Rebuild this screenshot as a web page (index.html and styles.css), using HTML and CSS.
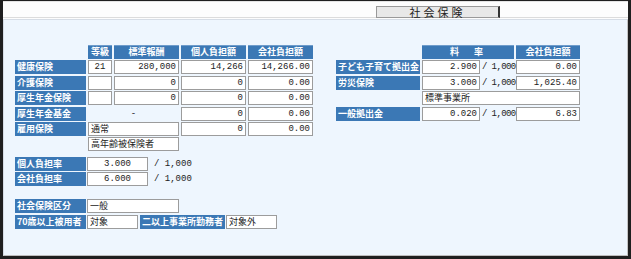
FILE: index.html
```html
<!DOCTYPE html>
<html lang="ja">
<head>
  <meta charset="UTF-8" />
  <title>社会保険</title>
  <link rel="stylesheet" href="styles.css">
</head>
<body>
  <div class="window">
    <div class="titlebar">
      <div class="title">社会保険</div>
    </div>

    <div class="content">
      <div class="left">
        <div class="main-grid">
          <div></div>
          <div class="hd">等級</div>
          <div class="hd">標準報酬</div>
          <div class="hd">個人負担額</div>
          <div class="hd">会社負担額</div>

          <div class="lb">健康保険</div>
          <div class="box center">21</div>
          <div class="box num">280,000</div>
          <div class="box num">14,266</div>
          <div class="box num">14,266.00</div>

          <div class="lb">介護保険</div>
          <div class="box"></div>
          <div class="box num">0</div>
          <div class="box num">0</div>
          <div class="box num">0.00</div>

          <div class="lb">厚生年金保険</div>
          <div class="box"></div>
          <div class="box num">0</div>
          <div class="box num">0</div>
          <div class="box num">0.00</div>

          <div class="lb">厚生年金基金</div>
          <div class="plain span2">-</div>
          <div class="box num">0</div>
          <div class="box num">0.00</div>

          <div class="lb">雇用保険</div>
          <div class="box txt span2">通常</div>
          <div class="box num">0</div>
          <div class="box num">0.00</div>

          <div></div>
          <div class="box txt span2">高年齢被保険者</div>
        </div>

        <div class="rates">
          <div class="row">
            <div class="lb">個人負担率</div>
            <div class="box center rate-box">3.000</div>
            <span class="per">/ 1,000</span>
          </div>
          <div class="row">
            <div class="lb">会社負担率</div>
            <div class="box center rate-box">6.000</div>
            <span class="per">/ 1,000</span>
          </div>
        </div>

        <div class="kubun">
          <div class="row">
            <div class="lb">社会保険区分</div>
            <div class="box txt wide-box">一般</div>
          </div>
          <div class="row">
            <div class="lb">70歳以上被用者</div>
            <div class="box txt short-box">対象</div>
            <div class="lb lb-mid">二以上事業所勤務者</div>
            <div class="box txt short-box">対象外</div>
          </div>
        </div>
      </div>

      <div class="right">
        <div class="side-grid">
          <div></div>
          <div class="hd spaced">料　率</div>
          <div class="hd">会社負担額</div>

          <div class="lb">子ども子育て拠出金</div>
          <div class="rate-cell"><div class="box num">2.900</div><span class="per">/ 1,000</span></div>
          <div class="box num">0.00</div>

          <div class="lb">労災保険</div>
          <div class="rate-cell"><div class="box num">3.000</div><span class="per">/ 1,000</span></div>
          <div class="box num">1,025.40</div>

          <div></div>
          <div class="box txt span2">標準事業所</div>

          <div class="lb">一般拠出金</div>
          <div class="rate-cell"><div class="box num">0.020</div><span class="per">/ 1,000</span></div>
          <div class="box num">6.83</div>
        </div>
      </div>
    </div>
  </div>
</body>
</html>
```

FILE: styles.css
```css
body {
  margin: 0;
  width: 631px;
  height: 259px;
  background: #1f1f1f;
  font-family: "Noto Sans CJK JP", sans-serif;
  font-size: 9px;
  color: #222;
  overflow: hidden;
}

.window {
  margin: 1px 3px 0 3px;
  height: 255px;
  background: #fdfdfd;
  border-top: 1px solid #e4e4e4;
  display: flex;
  flex-direction: column;
  box-sizing: border-box;
}

.titlebar {
  height: 16px;
  border-bottom: 1px solid #dcdcdc;
  padding: 4px 0 0 373px;
  box-sizing: border-box;
}

.title {
  width: 124px;
  height: 12px;
  line-height: 11px;
  box-sizing: border-box;
  background: #e8e8e8;
  border: 1px solid #999;
  border-right: 2px solid #333;
  text-align: center;
  font-size: 11px;
  letter-spacing: 3px;
  color: #222;
}

.content {
  flex: 1;
  margin-top: 1px;
  background: #eef6fe;
  border: 1px solid #d6dde6;
  border-bottom-color: #bdbdbd;
  border-right-color: #c4c4c4;
  display: flex;
  padding: 25px 0 0 11px;
  gap: 23px;
}

.main-grid {
  display: grid;
  grid-template-columns: 71px 24px 65px 65px 65px;
  grid-auto-rows: 14px;
  column-gap: 2px;
  row-gap: 1.4px;
}

.side-grid {
  display: grid;
  grid-template-columns: 84px 92px 64px;
  grid-auto-rows: 14px;
  column-gap: 2px;
  row-gap: 1.4px;
}

.span2 {
  grid-column: span 2;
}

.hd {
  background: #3b78b5;
  color: #fff;
  font-weight: bold;
  text-align: center;
  border-top: 1px solid #6f9ccb;
  box-sizing: border-box;
  line-height: 12px;
}

.spaced {
  letter-spacing: 3px;
}

.lb {
  background: #3b78b5;
  color: #fff;
  font-weight: bold;
  line-height: 14px;
  padding-left: 2px;
  white-space: nowrap;
  box-sizing: border-box;
}

.box {
  background: #fff;
  border: 1px solid #9c9c9c;
  box-sizing: border-box;
  line-height: 12px;
  white-space: nowrap;
  overflow: hidden;
}

.num {
  font-family: "Liberation Mono", monospace;
  text-align: right;
  padding-right: 2px;
}

.center {
  font-family: "Liberation Mono", monospace;
  text-align: center;
}

.txt {
  padding-left: 2px;
}

.plain {
  text-align: center;
  line-height: 14px;
  font-family: "Liberation Mono", monospace;
}

.per {
  font-family: "Liberation Mono", monospace;
  line-height: 14px;
  padding-left: 5px;
  white-space: nowrap;
}

.rate-cell {
  display: flex;
}

.rate-cell .box {
  width: 58px;
  flex: none;
}

.rate-cell .per {
  padding-left: 2px;
  letter-spacing: -0.6px;
}

.rates {
  margin-top: 6px;
  display: flex;
  flex-direction: column;
  gap: 1px;
}

.row {
  display: flex;
  height: 14px;
  gap: 1px;
}

.row .lb {
  width: 71px;
  flex: none;
}

.rate-box {
  width: 61px;
}

.kubun {
  margin-top: 13px;
  display: flex;
  flex-direction: column;
  gap: 2px;
}

.wide-box {
  width: 92px;
}

.short-box {
  width: 51px;
}

.row .lb-mid {
  width: 85px;
  margin-left: 1px;
}
```
